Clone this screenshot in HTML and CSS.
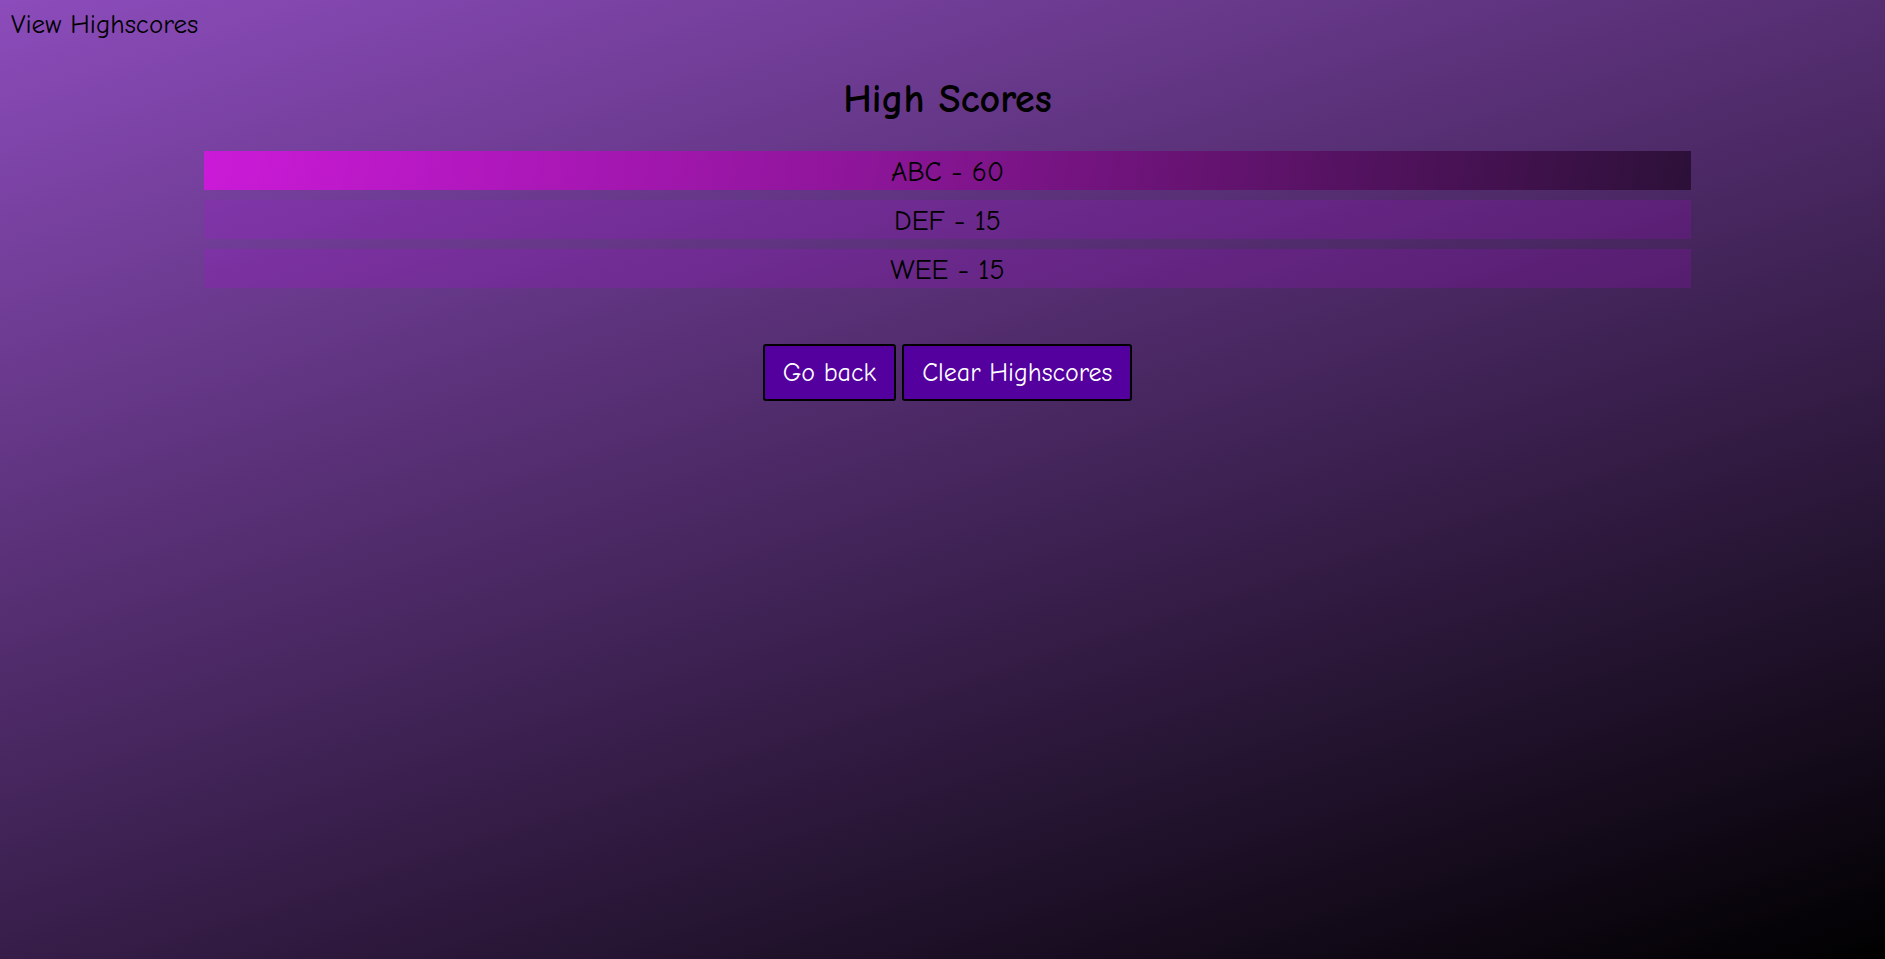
FILE: index.html
```html
<!DOCTYPE html>
<html lang="en">
<head>
<meta charset="utf-8">
<title>High Scores</title>
<link rel="stylesheet" href="styles.css">
</head>
<body>
<header class="topbar">
  <a class="view-link" href="#">View Highscores</a>
</header>
<main class="content">
  <h1 class="title">High Scores</h1>
  <ol class="scores">
    <li class="score score-top">ABC - 60</li>
    <li class="score">DEF - 15</li>
    <li class="score">WEE - 15</li>
  </ol>
  <div class="actions">
    <button class="btn" type="button">Go back</button>
    <button class="btn" type="button">Clear Highscores</button>
  </div>
</main>
</body>
</html>
```
FILE: styles.css
```css
html, body {
  margin: 0;
  padding: 0;
}
body {
  min-height: 100vh;
  background: linear-gradient(162deg, #8c4cbb 0%, #000 100%);
  font-family: "Comic Sans MS", "Comic Neue", "Open Sans", sans-serif;
  color: #000;
}
.topbar {
  height: 44px;
  padding: 10px 0 0 11px;
  box-sizing: border-box;
}
.view-link {
  display: block;
  color: #000;
  text-decoration: none;
  font-size: 27px;
  line-height: 30px;
}
.content {
  padding-left: 10px;
  display: flex;
  flex-direction: column;
  align-items: center;
}
.title {
  margin: 29px 0 0;
  font-size: 40px;
  line-height: 52px;
  font-weight: 700;
}
.scores {
  list-style: none;
  margin: 26px 0 0;
  padding: 0;
  width: 1487px;
  display: flex;
  flex-direction: column;
  gap: 10px;
}
.score {
  height: 39px;
  line-height: 42px;
  text-align: center;
  font-size: 28px;
  background: rgba(195, 0, 235, 0.16);
}
.score-top {
  background: linear-gradient(100deg, #cb1ad8 0%, #8c1598 45%, #2c1038 100%);
}
.actions {
  margin-top: 56px;
  display: flex;
  gap: 6px;
}
.btn {
  height: 57px;
  padding: 0 18px;
  background: #53009f;
  color: #fff;
  border: 2px solid #000;
  border-radius: 3px;
  font-family: inherit;
  font-size: 26px;
  cursor: pointer;
}
```
